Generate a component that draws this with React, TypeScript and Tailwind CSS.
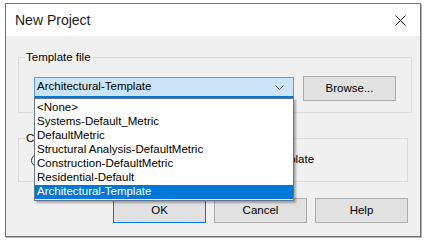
import { useState } from "react";

const TEMPLATES = [
  "<None>",
  "Systems-Default_Metric",
  "DefaultMetric",
  "Structural Analysis-DefaultMetric",
  "Construction-DefaultMetric",
  "Residential-Default",
  "Architectural-Template",
];

function CloseIcon() {
  return (
    <svg width="11" height="11" viewBox="0 0 11 11" className="block">
      <path d="M0.5 0.5 L10.5 10.5 M10.5 0.5 L0.5 10.5" stroke="#1a1a1a" strokeWidth="1" fill="none" />
    </svg>
  );
}

function Chevron() {
  return (
    <svg width="9" height="5" viewBox="0 0 9 5" className="block">
      <path d="M0.5 0.5 L4.5 4.5 L8.5 0.5" stroke="#606060" strokeWidth="1" fill="none" />
    </svg>
  );
}

function Radio({ label, className = "" }: { label: string; className?: string }) {
  return (
    <label className={`flex items-center gap-[4px] ${className}`}>
      <span className="h-[13px] w-[13px] rounded-full border border-[#333333] bg-white" />
      <span>{label}</span>
    </label>
  );
}

function DialogButton({ label, primary = false }: { label: string; primary?: boolean }) {
  return (
    <button
      className={`h-[25px] w-[93px] border bg-[#e1e1e1] text-black ${
        primary ? "border-[#0078d7]" : "border-[#adadad]"
      }`}
    >
      {label}
    </button>
  );
}

export default function App() {
  const [selected] = useState("Architectural-Template");

  return (
    <div
      className="h-[241px] w-[426px] bg-white pl-[5px] pt-[3px] text-[11.5px] text-black"
      style={{ fontFamily: '"Liberation Sans", Arial, sans-serif' }}
    >
      <div className="flex h-[234px] w-[416px] flex-col border border-[#707070] shadow-[1px_1px_0_#b0b0b0]">
        {/* title bar */}
        <div className="flex h-[32px] items-center justify-between bg-white pl-[9px] pr-[14px]">
          <span className="text-[14px] text-[#1a1a1a]">New Project</span>
          <CloseIcon />
        </div>

        {/* body */}
        <div className="flex flex-1 flex-col bg-[#f0f0f0] px-[12px]">
          <fieldset className="mt-[13px] border border-[#dcdcdc] p-0">
            <legend className="ml-[6px] px-[1px] leading-[16px]">Template file</legend>
            <div className="flex items-start gap-[9px] px-[15px] pb-[11px] pt-[11px]">
              <div className="relative mt-[1px] w-[260px]">
                <div className="flex h-[21px] items-center justify-between border border-[#569de5] border-b-2 border-b-[#0078d7] bg-[#cce4f7] pl-[2px] pr-[9px]">
                  <span>{selected}</span>
                  <Chevron />
                </div>
                {/* open dropdown list */}
                <ul className="absolute left-0 top-[21px] z-10 w-[260px] border border-[#64778a] bg-white pb-[1px] pt-[2px] shadow-[2px_2px_2px_rgba(0,0,0,0.3)]">
                  {TEMPLATES.map((t) => (
                    <li
                      key={t}
                      className={`flex h-[14px] items-center pl-[2px] ${
                        t === selected ? "bg-[#0078d7] text-white" : ""
                      }`}
                    >
                      {t}
                    </li>
                  ))}
                </ul>
              </div>
              <DialogButton label="Browse..." />
            </div>
          </fieldset>

          <fieldset className="mt-[17px] border border-[#dcdcdc] p-0">
            <legend className="ml-[6px] px-[1px] leading-[16px]">Create new</legend>
            <div className="mb-[13px] mt-[6px] flex h-[16px] items-center pl-[12px]">
              <Radio label="Project" className="w-[183px]" />
              <Radio label="Project template" />
            </div>
          </fieldset>

          <div className="mt-[16px] flex justify-end gap-[8px]">
            <DialogButton label="OK" primary />
            <DialogButton label="Cancel" />
            <DialogButton label="Help" />
          </div>
        </div>
      </div>
    </div>
  );
}
